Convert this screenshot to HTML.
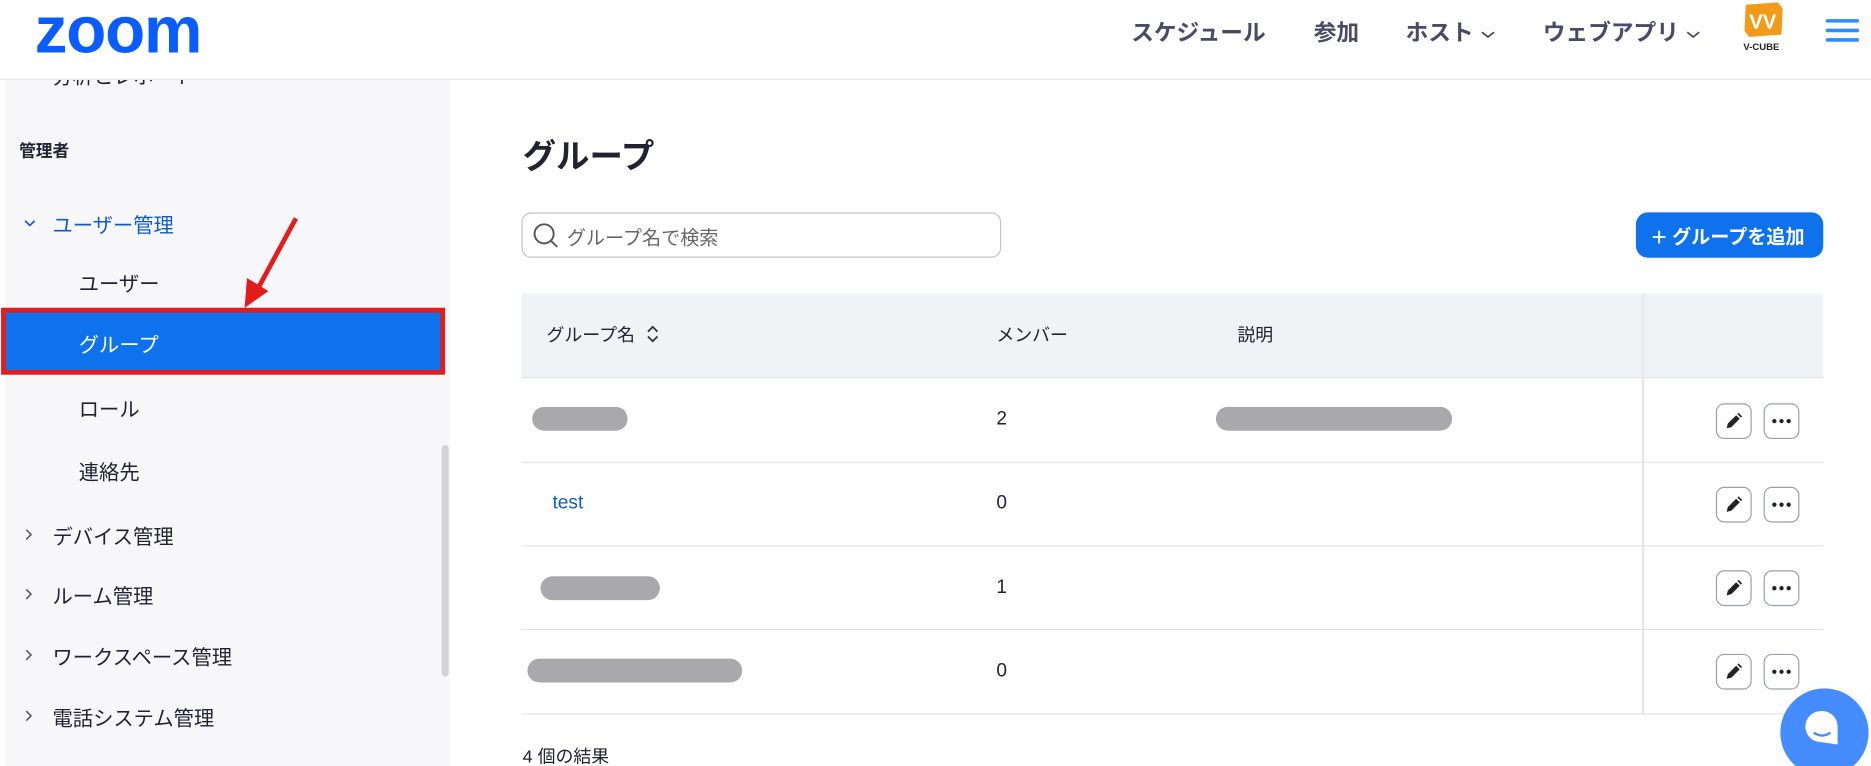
<!DOCTYPE html>
<html><head><meta charset="utf-8"><style>
*{margin:0;padding:0;box-sizing:border-box}
html,body{width:1871px;height:766px;overflow:hidden;background:#fff}
#w{position:absolute;left:0;top:0;width:1568px;height:642px;overflow:hidden;transform:scale(1.19324,1.1931);transform-origin:0 0;font-family:"Liberation Sans","Noto Sans CJK JP",sans-serif;color:#222230}
.a{position:absolute;white-space:nowrap}
.nav{font-size:19px;font-weight:bold;color:#4a4a66;top:13px}
.sb{font-size:17px;color:#222230}
.pill{position:absolute;height:20px;border-radius:10px;background:#a9a9ac}
.ln{position:absolute;left:437px;width:1091px;height:1px;background:#e3e3e6}
.ib{position:absolute;width:30px;height:30px;border:1px solid #9aa0a8;border-radius:7px;background:#fff}
.td{font-size:16px;color:#222230}
.chev{position:absolute;left:19px}
</style></head><body><div id="w">
<div class="a" style="left:29px;top:-7px;font-size:55px;font-weight:bold;color:#0b5cff;letter-spacing:-1px;font-family:'Liberation Sans',sans-serif">zoom</div>
<div class="a nav" style="left:948px">スケジュール</div>
<div class="a nav" style="left:1101px">参加</div>
<div class="a nav" style="left:1178px">ホスト<svg width="16" height="10" style="margin-left:4px"><path d="M3 3 L8 7 L13 3" fill="none" stroke="#4a4a66" stroke-width="1.5"/></svg></div>
<div class="a nav" style="left:1293px">ウェブアプリ<svg width="16" height="10" style="margin-left:4px"><path d="M3 3 L8 7 L13 3" fill="none" stroke="#4a4a66" stroke-width="1.5"/></svg></div>
<svg class="a" style="left:1458px;top:1px" width="40" height="44" viewBox="0 0 40 44"><path d="M5 3 L32 1 L36 6 L35 28 L8 30 L4 25Z" fill="#f29b1a"/><text x="8" y="23" font-size="17" font-weight="bold" fill="#fff" font-family="Liberation Sans">VV</text><text x="3" y="41" font-size="8" font-weight="bold" fill="#222" font-family="Liberation Sans">V-CUBE</text></svg>
<div class="a" style="left:1530px;top:16px;width:28px;height:3px;background:#2d8cff;border-radius:2px"></div>
<div class="a" style="left:1530px;top:24px;width:28px;height:3px;background:#2d8cff;border-radius:2px"></div>
<div class="a" style="left:1530px;top:32px;width:28px;height:3px;background:#2d8cff;border-radius:2px"></div>
<div class="a" style="left:0;top:66px;width:1568px;height:1px;background:#e6e6ea"></div>
<div class="a" style="left:4px;top:67px;width:373px;height:575px;background:#f7f7fa"></div>
<div class="a sb" style="left:44px;top:50px;clip-path:inset(17px 0 0 0)">分析とレポート</div>
<div class="a" style="left:16px;top:116px;font-size:14px;font-weight:bold">管理者</div>
<svg class="chev" style="top:182px" width="12" height="10"><path d="M2 3 L6 7 L10 3" fill="none" stroke="#0e5cc9" stroke-width="1.4"/></svg>
<div class="a sb" style="left:44px;top:175px;color:#0e5cc9">ユーザー管理</div>
<div class="a sb" style="left:66px;top:224px">ユーザー</div>
<div class="a" style="left:1px;top:258px;width:372px;height:56px;background:#0e72ed;border:4px solid #e31c1c"></div>
<div class="a sb" style="left:66px;top:275px;color:#fff">グループ</div>
<div class="a sb" style="left:66px;top:329px">ロール</div>
<div class="a sb" style="left:66px;top:382px">連絡先</div>
<svg class="chev" style="top:442px" width="10" height="12"><path d="M3 2 L7 6 L3 10" fill="none" stroke="#555" stroke-width="1.3"/></svg><div class="a sb" style="left:44px;top:436px">デバイス管理</div>
<svg class="chev" style="top:492px" width="10" height="12"><path d="M3 2 L7 6 L3 10" fill="none" stroke="#555" stroke-width="1.3"/></svg><div class="a sb" style="left:44px;top:486px">ルーム管理</div>
<svg class="chev" style="top:543px" width="10" height="12"><path d="M3 2 L7 6 L3 10" fill="none" stroke="#555" stroke-width="1.3"/></svg><div class="a sb" style="left:44px;top:537px">ワークスペース管理</div>
<svg class="chev" style="top:594px" width="10" height="12"><path d="M3 2 L7 6 L3 10" fill="none" stroke="#555" stroke-width="1.3"/></svg><div class="a sb" style="left:44px;top:588px">電話システム管理</div>
<div class="a sb" style="left:44px;top:638px">アカウント管理</div>
<div class="a" style="left:370px;top:373px;width:6px;height:194px;background:#d4d4d8;border-radius:3px"></div>
<svg class="a" style="left:195px;top:178px" width="60" height="90"><line x1="53" y1="5" x2="20" y2="66" stroke="#e31c1c" stroke-width="4"/><path d="M10 80 L12 55 L30 66Z" fill="#e31c1c"/></svg>
<div class="a" style="left:438px;top:110px;font-size:28px;font-weight:bold">グループ</div>
<div class="a" style="left:437px;top:178px;width:402px;height:38px;border:1px solid #c4c4c8;border-radius:8px"></div>
<svg class="a" style="left:446px;top:186px" width="24" height="24"><circle cx="10" cy="10" r="8" fill="none" stroke="#555" stroke-width="1.6"/><line x1="16" y1="16" x2="21" y2="21" stroke="#555" stroke-width="1.6"/></svg>
<div class="a" style="left:475px;top:186px;font-size:16px;color:#666">グループ名で検索</div>
<div class="a" style="left:1371px;top:178px;width:157px;height:38px;background:#0e72ed;border-radius:10px"></div>
<div class="a" style="left:1384px;top:184px;font-size:16px;color:#fff;font-weight:bold"><span style="font-size:22px;font-weight:normal;position:relative;top:2px">+</span> グループを追加</div>
<div class="a" style="left:437px;top:246px;width:1091px;height:70px;background:#f0f3f6"></div>
<div class="a td" style="left:458px;top:270px;font-size:15px">グループ名</div>
<svg class="a" style="left:540px;top:272px" width="14" height="16"><path d="M3 6 L7 2 L11 6 M3 10 L7 14 L11 10" fill="none" stroke="#333" stroke-width="1.5"/></svg>
<div class="a td" style="left:835px;top:270px;font-size:15px">メンバー</div>
<div class="a td" style="left:1037px;top:270px;font-size:15px">説明</div>
<div class="a" style="left:1376px;top:246px;width:2px;height:352px;background:#e8e8ec"></div>
<div class="ln" style="top:316px"></div><div class="ln" style="top:387px"></div><div class="ln" style="top:457px"></div><div class="ln" style="top:527px"></div><div class="ln" style="top:598px"></div>
<div class="pill" style="left:446px;top:341px;width:80px"></div><div class="a td" style="left:835px;top:343px">2</div><div class="pill" style="left:1019px;top:341px;width:198px"></div>
<div class="a td" style="left:463px;top:413px;color:#0e5cc9">test</div><div class="a td" style="left:835px;top:413px">0</div>
<div class="pill" style="left:453px;top:483px;width:100px"></div><div class="a td" style="left:835px;top:484px">1</div>
<div class="pill" style="left:442px;top:552px;width:180px"></div><div class="a td" style="left:835px;top:554px">0</div>
<div id="acts"></div>
<div class="a" style="left:438px;top:623px;font-size:15px">4 個の結果</div>
<div class="a" style="left:1492px;top:577px;width:74px;height:74px;border-radius:50%;background:#448cff"></div>
<svg class="a" style="left:1510px;top:592px" width="40" height="40"><path d="M16 4 A13 13 0 1 0 16 30 L30 32 L30 17 A13 13 0 0 0 16 4Z" fill="#fff"/><path d="M10 22 Q17 27 24 22" fill="none" stroke="#448cff" stroke-width="2"/></svg>
<script>
var h='';[338,408,478,548].forEach(function(y){
h+='<div class="ib" style="left:1438px;top:'+y+'px"></div><svg class="a" style="left:1445px;top:'+(y+7)+'px" width="16" height="16"><path d="M2 14 L3 10 L10 3 L13 6 L6 13Z" fill="#222"/><path d="M11 2 L12 1 L15 4 L14 5Z" fill="#222"/></svg>';
h+='<div class="ib" style="left:1478px;top:'+y+'px"></div><svg class="a" style="left:1478px;top:'+y+'px" width="30" height="30"><circle cx="9" cy="15" r="1.8" fill="#222"/><circle cx="15" cy="15" r="1.8" fill="#222"/><circle cx="21" cy="15" r="1.8" fill="#222"/></svg>';
});document.getElementById('acts').outerHTML=h;
</script>
</div></body></html>
